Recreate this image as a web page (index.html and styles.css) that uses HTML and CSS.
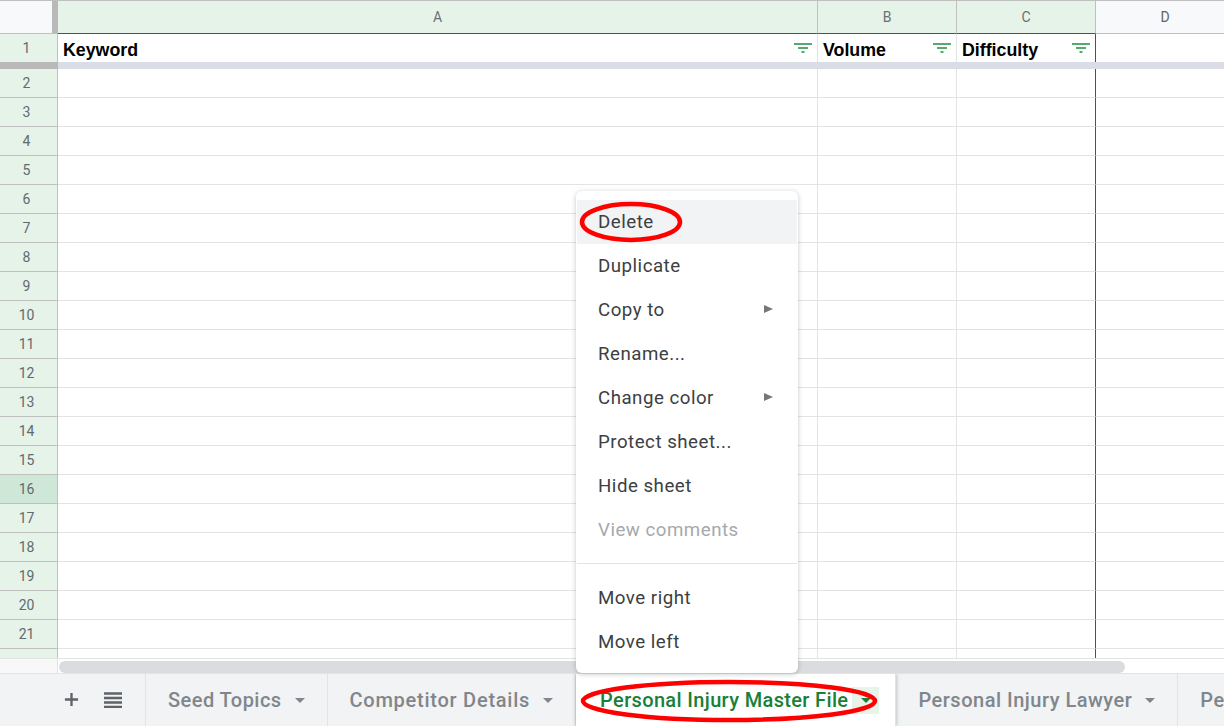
FILE: index.html
```html
<!DOCTYPE html>
<html lang="en">
<head>
  <meta charset="utf-8">
  <title>Personal Injury Master File</title>
  <link rel="stylesheet" href="styles.css">
</head>
<body>
  <div class="sheet">
    <!-- column letters -->
    <div class="col-head">
      <div class="corner"></div>
      <div class="letter col-a on">A</div>
      <div class="letter col-b on">B</div>
      <div class="letter col-c on">C</div>
      <div class="letter col-d">D</div>
    </div>

    <!-- frozen first row -->
    <div class="row row-first">
      <div class="num">1</div>
      <div class="cell col-a head"><b>Keyword</b>
        <svg class="filter" viewBox="0 0 18 10"><path d="M0 1h18M4 5h10M7.500 9h3" /></svg>
      </div>
      <div class="cell col-b head"><b>Volume</b>
        <svg class="filter" viewBox="0 0 18 10"><path d="M0 1h18M4 5h10M7.500 9h3" /></svg>
      </div>
      <div class="cell col-c head last"><b>Difficulty</b>
        <svg class="filter" viewBox="0 0 18 10"><path d="M0 1h18M4 5h10M7.500 9h3" /></svg>
      </div>
      <div class="cell col-d"></div>
    </div>
    <div class="freeze"><div class="freeze-num"></div><div class="freeze-rest"></div></div>

    <div class="rows">
      <div class="row"><div class="num">2</div><div class="cell col-a"></div><div class="cell col-b"></div><div class="cell col-c last"></div><div class="cell col-d"></div></div>
      <div class="row"><div class="num">3</div><div class="cell col-a"></div><div class="cell col-b"></div><div class="cell col-c last"></div><div class="cell col-d"></div></div>
      <div class="row"><div class="num">4</div><div class="cell col-a"></div><div class="cell col-b"></div><div class="cell col-c last"></div><div class="cell col-d"></div></div>
      <div class="row"><div class="num">5</div><div class="cell col-a"></div><div class="cell col-b"></div><div class="cell col-c last"></div><div class="cell col-d"></div></div>
      <div class="row"><div class="num">6</div><div class="cell col-a"></div><div class="cell col-b"></div><div class="cell col-c last"></div><div class="cell col-d"></div></div>
      <div class="row"><div class="num">7</div><div class="cell col-a"></div><div class="cell col-b"></div><div class="cell col-c last"></div><div class="cell col-d"></div></div>
      <div class="row"><div class="num">8</div><div class="cell col-a"></div><div class="cell col-b"></div><div class="cell col-c last"></div><div class="cell col-d"></div></div>
      <div class="row"><div class="num">9</div><div class="cell col-a"></div><div class="cell col-b"></div><div class="cell col-c last"></div><div class="cell col-d"></div></div>
      <div class="row"><div class="num">10</div><div class="cell col-a"></div><div class="cell col-b"></div><div class="cell col-c last"></div><div class="cell col-d"></div></div>
      <div class="row"><div class="num">11</div><div class="cell col-a"></div><div class="cell col-b"></div><div class="cell col-c last"></div><div class="cell col-d"></div></div>
      <div class="row"><div class="num">12</div><div class="cell col-a"></div><div class="cell col-b"></div><div class="cell col-c last"></div><div class="cell col-d"></div></div>
      <div class="row"><div class="num">13</div><div class="cell col-a"></div><div class="cell col-b"></div><div class="cell col-c last"></div><div class="cell col-d"></div></div>
      <div class="row"><div class="num">14</div><div class="cell col-a"></div><div class="cell col-b"></div><div class="cell col-c last"></div><div class="cell col-d"></div></div>
      <div class="row"><div class="num">15</div><div class="cell col-a"></div><div class="cell col-b"></div><div class="cell col-c last"></div><div class="cell col-d"></div></div>
      <div class="row"><div class="num sel">16</div><div class="cell col-a"></div><div class="cell col-b"></div><div class="cell col-c last"></div><div class="cell col-d"></div></div>
      <div class="row"><div class="num">17</div><div class="cell col-a"></div><div class="cell col-b"></div><div class="cell col-c last"></div><div class="cell col-d"></div></div>
      <div class="row"><div class="num">18</div><div class="cell col-a"></div><div class="cell col-b"></div><div class="cell col-c last"></div><div class="cell col-d"></div></div>
      <div class="row"><div class="num">19</div><div class="cell col-a"></div><div class="cell col-b"></div><div class="cell col-c last"></div><div class="cell col-d"></div></div>
      <div class="row"><div class="num">20</div><div class="cell col-a"></div><div class="cell col-b"></div><div class="cell col-c last"></div><div class="cell col-d"></div></div>
      <div class="row"><div class="num">21</div><div class="cell col-a"></div><div class="cell col-b"></div><div class="cell col-c last"></div><div class="cell col-d"></div></div>
      <div class="row"><div class="num"></div><div class="cell col-a"></div><div class="cell col-b"></div><div class="cell col-c last"></div><div class="cell col-d"></div></div>
    </div>

    <!-- horizontal scrollbar -->
    <div class="scroll">
      <div class="scroll-gap"></div>
      <div class="scroll-thumb"></div>
    </div>

    <!-- sheet tabs -->
    <div class="tabs">
      <div class="tools">
        <svg class="tool" viewBox="0 0 16 16"><path class="plus" d="M8 1v14M1 8h14" /></svg>
        <svg class="tool" viewBox="0 0 18 16"><path class="lines" d="M0 1.500h18M0 6h18M0 10.500h18M0 15h18" /></svg>
      </div>
      <div class="tab">Seed Topics<span class="arrow"></span></div>
      <div class="tab tab-wide">Competitor Details<span class="arrow"></span></div>
      <div class="tab active">Personal Injury Master File<span class="arrow-box"><span class="arrow"></span></span></div>
      <div class="tab tab-lawyer">Personal Injury Lawyer<span class="arrow"></span></div>
      <div class="tab">Pe</div>
    </div>
  </div>

  <!-- tab context menu -->
  <ul class="menu">
    <li class="hover">Delete</li>
    <li>Duplicate</li>
    <li class="sub">Copy to</li>
    <li>Rename...</li>
    <li class="sub">Change color</li>
    <li>Protect sheet...</li>
    <li>Hide sheet</li>
    <li class="off">View comments</li>
    <li class="sep"></li>
    <li>Move right</li>
    <li>Move left</li>
  </ul>

  <!-- red annotation rings -->
  <svg class="ring ring-delete" viewBox="0 0 104 42"><ellipse cx="52" cy="21" rx="49" ry="18" /></svg>
  <svg class="ring ring-tab" viewBox="0 0 298 44"><ellipse cx="149" cy="22" rx="146" ry="19" /></svg>
</body>
</html>
```

FILE: styles.css
```css
* { box-sizing: border-box; }

html, body {
  margin: 0;
  height: 726px;
  overflow: hidden;
  background: #fff;
  font-family: Roboto, "Liberation Sans", sans-serif;
}

.sheet {
  display: flex;
  flex-direction: column;
  height: 726px;
}

/* column widths */
.col-a { width: 760px; flex: none; }
.col-b { width: 139px; flex: none; }
.col-c { width: 139px; flex: none; }
.col-d { width: 139px; flex: none; }

/* column letters */
.col-head {
  display: flex;
  height: 34px;
  flex: none;
  border-top: 1px solid #bfbfbf;
  background: #f8f9fa;
}
.corner {
  width: 58px;
  flex: none;
  border-right: 6px solid #b9b9b9;
  border-bottom: 1px solid #c0c0c0;
}
.letter {
  display: flex;
  align-items: center;
  justify-content: center;
  border-right: 1px solid #c0c0c0;
  border-bottom: 1px solid #c0c0c0;
  font-size: 14px;
  color: #5f6368;
}
.letter.on {
  background: #e6f3e9;
  border-bottom: 1px solid #1e6e42;
  color: #6b6f72;
}

/* rows */
.row {
  display: flex;
  height: 29px;
  flex: none;
}
.row-first { height: 28px; }
.num {
  width: 58px;
  flex: none;
  display: flex;
  align-items: center;
  justify-content: center;
  padding-right: 4px;
  background: #e6f3e9;
  border-right: 1px solid #c0c0c0;
  border-bottom: 1px solid #c0c0c0;
  font-size: 14px;
  color: #5f6b70;
}
.num.sel { background: #cfe7d7; }
.row-first .num { border-bottom: 0; }

.cell {
  border-right: 1px solid #e2e3e3;
  border-bottom: 1px solid #e2e3e3;
}
.cell.last { border-right: 1px solid #1e6e42; }
.cell.col-d { border-right: 0; }

.head {
  display: flex;
  align-items: center;
  justify-content: space-between;
  padding: 4px 5px 0 5px;
  font-family: "Liberation Sans", Arial, sans-serif;
  font-size: 17.8px;
  color: #000;
}
.row-first .cell { border-bottom: 0; }

.filter {
  width: 18px;
  height: 10px;
  margin-top: -5px;
  fill: none;
  stroke: #1e8e3e;
  stroke-width: 1.500;
}

/* frozen row bar */
.freeze {
  display: flex;
  height: 7px;
  flex: none;
}
.freeze-num {
  width: 58px;
  background: #b9b9b9;
}
.freeze-rest {
  flex: 1;
  background: #dadde5;
}

.rows {
  height: 589px;
  flex: none;
  overflow: hidden;
}

/* scrollbar */
.scroll {
  display: flex;
  height: 15px;
  flex: none;
  padding-top: 2px;
  background: #fff;
  border-top: 1px solid #e2e3e3;
}
.scroll-gap {
  width: 58px;
  height: 14px;
  margin-top: -2px;
  background: #f8f8f8;
  border-right: 1px solid #e2e3e3;
}
.scroll-thumb {
  width: 1066px;
  height: 12px;
  margin-left: 1px;
  border-radius: 6px;
  background: #dadce0;
}

/* sheet tabs */
.tabs {
  display: flex;
  flex: 1;
  background: #f1f3f4;
  border-top: 1px solid #e2e3e3;
  overflow: hidden;
}
.tools {
  width: 146px;
  flex: none;
  display: flex;
  align-items: center;
  padding: 0 0 1px 64px;
  gap: 25px;
  border-right: 1px solid #e2e3e3;
}
.tool { display: block; flex: none; }
.tool:first-child { width: 15px; height: 15px; }
.tool:last-child { width: 18px; height: 16px; }
.plus { fill: none; stroke: #5f6368; stroke-width: 2.500; }
.lines { fill: none; stroke: #5f6368; stroke-width: 2.500; }

.tab {
  display: flex;
  align-items: center;
  flex: none;
  padding: 0 22px;
  border-right: 1px solid #e2e3e3;
  font-size: 20px;
  font-weight: 500;
  color: #80868b;
  letter-spacing: 0.45px;
  white-space: nowrap;
}
.tab-wide { letter-spacing: 0.75px; }
.tab-lawyer { letter-spacing: 0.5px; }
.arrow {
  display: inline-block;
  width: 0;
  height: 0;
  margin-left: 13px;
  border-left: 5.500px solid transparent;
  border-right: 5.500px solid transparent;
  border-top: 5.500px solid #80868b;
}
.tab.active {
  position: relative;
  padding: 0 16px 0 24px;
  background: #fff;
  color: #188038;
  letter-spacing: 0.35px;
  box-shadow: 0 0 4px rgba(60, 64, 67, .4);
}
.arrow-box {
  display: flex;
  align-items: center;
  justify-content: center;
  width: 27px;
  height: 27px;
  margin-left: 4px;
  background: #e6f4ea;
}
.arrow-box .arrow {
  margin: 0;
  border-top-color: #188038;
}

/* context menu */
.menu {
  position: absolute;
  left: 576px;
  top: 191px;
  width: 222px;
  height: 482px;
  margin: 0;
  padding: 9px 1px 0;
  list-style: none;
  background: #fff;
  border-radius: 6px;
  box-shadow: 0 1px 5px rgba(60, 64, 67, .3);
  font-size: 18.700px;
  letter-spacing: 0.5px;
  color: #3c4043;
}
.menu li {
  position: relative;
  height: 44px;
  line-height: 44px;
  padding-left: 21px;
}
.menu li.hover { background: #f1f3f4; }
.menu li.off { color: #a6a9ad; }
.menu li.sep {
  height: 23px;
  margin-top: -11px;
  margin-bottom: 12px;
  border-bottom: 1px solid #e2e3e3;
}
.menu li.sub::after {
  content: "";
  position: absolute;
  right: 24px;
  top: 17px;
  border-top: 4.500px solid transparent;
  border-bottom: 4.500px solid transparent;
  border-left: 9px solid #777;
}

/* annotation rings */
.ring {
  position: absolute;
  fill: none;
  stroke: #f00;
  stroke-width: 4.500;
}
.ring-delete {
  left: 579px;
  top: 201px;
  width: 104px;
  height: 42px;
}
.ring-tab {
  left: 580px;
  top: 679px;
  width: 298px;
  height: 44px;
}
```
